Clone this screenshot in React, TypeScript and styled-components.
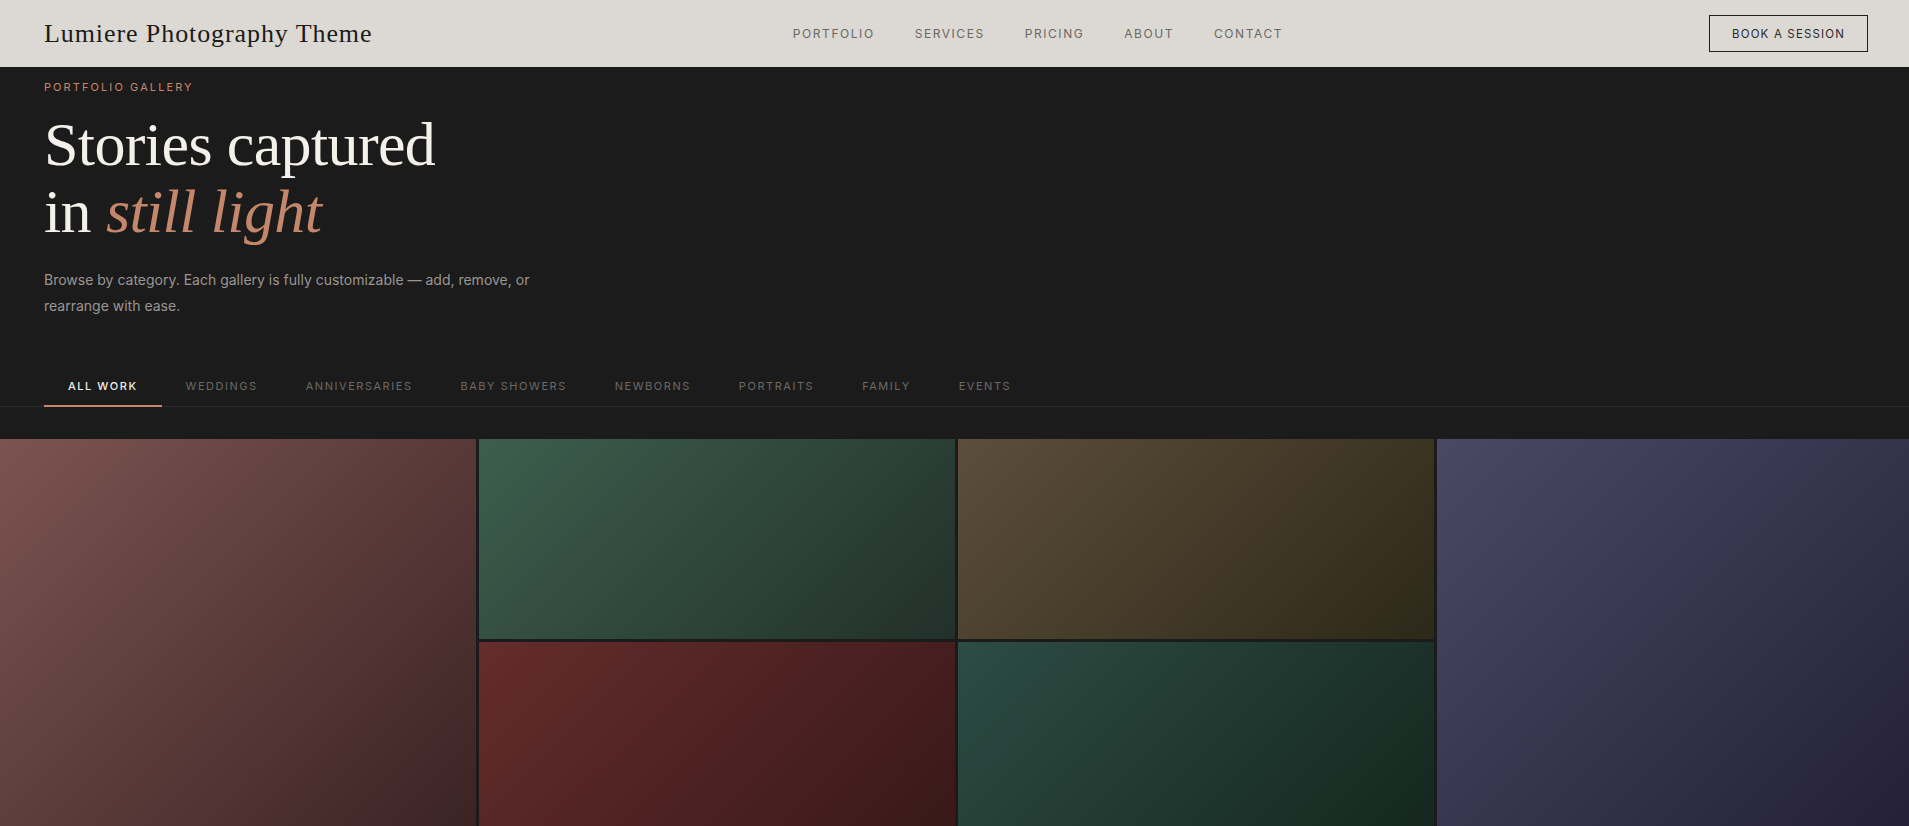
import React, { useState } from 'react';
import styled, { createGlobalStyle } from 'styled-components';

const GlobalStyle = createGlobalStyle`
  * { box-sizing: border-box; }
  body {
    margin: 0;
    background: #1b1b1b;
    font-family: Inter, "Noto Sans", sans-serif;
  }
`;

const navItems = ['Portfolio', 'Services', 'Pricing', 'About', 'Contact'];
const categories = ['All Work', 'Weddings', 'Anniversaries', 'Baby Showers', 'Newborns', 'Portraits', 'Family', 'Events'];

type Tile = { from: string; to: string; tall?: boolean };

const tiles: Tile[] = [
  { from: '#7b5451', to: '#3a2223', tall: true },
  { from: '#3d5e4d', to: '#22302a' },
  { from: '#5c4e3a', to: '#2d2819' },
  { from: '#4b4864', to: '#221f37', tall: true },
  { from: '#652c2c', to: '#381818' },
  { from: '#2d4c44', to: '#14261d' },
];

const Header = styled.header`
  height: 67px;
  background: #dcd9d4;
  display: flex;
  align-items: center;
  padding: 0 41px 0 44px;
`;

const Logo = styled.div`
  flex: 1;
  font-family: "Liberation Serif", "Times New Roman", serif;
  font-size: 26px;
  letter-spacing: 0.035em;
  color: #1b1b1b;
`;

const Nav = styled.nav`
  display: flex;
  gap: 40px;
`;

const NavLink = styled.a`
  font-size: 12px;
  letter-spacing: 0.13em;
  text-transform: uppercase;
  color: #6b6864;
  text-decoration: none;
`;

const BookButton = styled.button`
  margin-left: 426px;
  height: 37px;
  padding: 0 22px;
  background: transparent;
  border: 1px solid #1d1d1d;
  font-family: Inter, "Noto Sans", sans-serif;
  font-size: 11.5px;
  letter-spacing: 0.1em;
  text-transform: uppercase;
  color: #2a2a2a;
`;

const Hero = styled.section`
  padding: 12px 44px 0;
`;

const Eyebrow = styled.p`
  margin: 0;
  font-size: 11px;
  line-height: 16px;
  letter-spacing: 0.19em;
  text-transform: uppercase;
  color: #c4876c;
`;

const Title = styled.h1`
  margin: 16px 0 0;
  font-family: "Liberation Serif", "Times New Roman", serif;
  font-weight: 400;
  font-size: 62px;
  line-height: 67px;
  letter-spacing: -0.01em;
  color: #f4f0ea;
`;

const Accent = styled.em`
  color: #c4876c;
`;

const Lead = styled.p`
  margin: 22px 0 0;
  max-width: 500px;
  font-size: 14px;
  line-height: 26px;
  color: #9a9692;
`;

const TabBar = styled.div`
  margin-top: 43px;
  padding: 0 44px;
  display: flex;
  border-bottom: 1px solid #2c2c2c;
`;

const Tab = styled.button<{ $active: boolean }>`
  padding: 16px 24px 11px;
  margin-bottom: -1px;
  background: none;
  border: none;
  border-bottom: 2px solid ${p => (p.$active ? '#c4876c' : 'transparent')};
  font-family: Inter, "Noto Sans", sans-serif;
  font-size: 11px;
  line-height: 16px;
  font-weight: ${p => (p.$active ? 500 : 400)};
  letter-spacing: 0.14em;
  text-transform: uppercase;
  color: ${p => (p.$active ? '#f1ede7' : '#6c6965')};
  cursor: pointer;
`;

const GalleryWrap = styled.div`
  margin-top: 32px;
  overflow: hidden;
`;

const Gallery = styled.div`
  margin-right: -4px;
  display: grid;
  grid-template-columns: repeat(4, 1fr);
  grid-auto-rows: 200px;
  gap: 2.5px;
`;

const Photo = styled.div<{ $from: string; $to: string; $tall?: boolean }>`
  grid-row: ${p => (p.$tall ? 'span 2' : 'span 1')};
  background: linear-gradient(135deg, ${p => p.$from}, ${p => p.$to});
`;

export default function App() {
  const [active, setActive] = useState(0);
  return (
    <>
      <GlobalStyle />
      <Header>
        <Logo>Lumiere Photography Theme</Logo>
        <Nav>
          {navItems.map(item => (
            <NavLink key={item} href="#">{item}</NavLink>
          ))}
        </Nav>
        <BookButton>Book a Session</BookButton>
      </Header>
      <Hero>
        <Eyebrow>Portfolio Gallery</Eyebrow>
        <Title>
          Stories captured
          <br />
          in <Accent>still light</Accent>
        </Title>
        <Lead>
          Browse by category. Each gallery is fully customizable — add, remove, or rearrange with ease.
        </Lead>
      </Hero>
      <TabBar>
        {categories.map((c, i) => (
          <Tab key={c} $active={i === active} onClick={() => setActive(i)}>{c}</Tab>
        ))}
      </TabBar>
      <GalleryWrap>
        <Gallery>
          {tiles.map((t, i) => (
            <Photo key={i} $from={t.from} $to={t.to} $tall={t.tall} />
          ))}
        </Gallery>
      </GalleryWrap>
    </>
  );
}
